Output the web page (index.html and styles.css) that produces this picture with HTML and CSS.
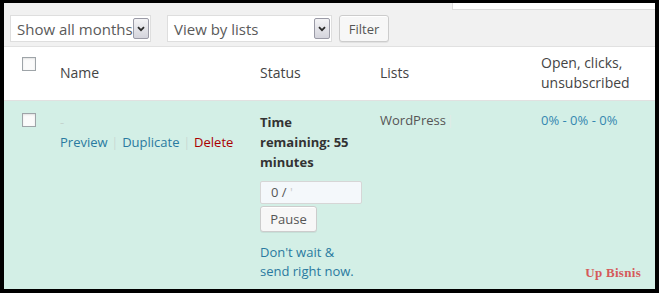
FILE: index.html
```html
<!DOCTYPE html>
<html lang="en">
<head>
    <meta charset="UTF-8">
    <meta name="viewport" content="width=device-width, initial-scale=1.0">
    <title>Newsletters</title>
    <link rel="stylesheet" href="styles.css">
</head>
<body>
    <div class="screen">
        <div class="toolbar">
            <div class="toolbar-strip"><div class="strip-box"></div></div>
            <div class="controls">
                <div class="fake-select months">
                    <span>Show all months</span>
                    <span class="select-arrow"><svg width="8" height="6" viewBox="0 0 8 6"><path d="M1 1.2 L4 4.2 L7 1.2" fill="none" stroke="#2b2b2b" stroke-width="1.8"/></svg></span>
                </div>
                <div class="fake-select lists">
                    <span>View by lists</span>
                    <span class="select-arrow"><svg width="8" height="6" viewBox="0 0 8 6"><path d="M1 1.2 L4 4.2 L7 1.2" fill="none" stroke="#2b2b2b" stroke-width="1.8"/></svg></span>
                </div>
                <button class="btn filter-btn">Filter</button>
            </div>
        </div>

        <table class="list-table">
            <colgroup>
                <col class="col-check">
                <col class="col-name">
                <col class="col-status">
                <col class="col-lists">
                <col class="col-stats">
            </colgroup>
            <thead>
                <tr>
                    <th class="check-col"><span class="checkbox"></span></th>
                    <th>Name</th>
                    <th>Status</th>
                    <th>Lists</th>
                    <th>Open, clicks, unsubscribed</th>
                </tr>
            </thead>
            <tbody>
                <tr class="active-row">
                    <td class="check-col"><span class="checkbox"></span></td>
                    <td>
                        <div class="empty-title">-</div>
                        <div class="row-actions">
                            <a href="#" class="link">Preview</a><span class="sep">|</span><a href="#" class="link">Duplicate</a><span class="sep">|</span><a href="#" class="delete">Delete</a>
                        </div>
                    </td>
                    <td>
                        <div class="time-left">Time remaining: 55 minutes</div>
                        <div class="progress-box">0 /<span class="faint"> '</span></div>
                        <button class="btn pause-btn">Pause</button>
                        <a href="#" class="link send-now">Don't wait &amp; send right now.</a>
                    </td>
                    <td class="list-name">WordPress<span class="sep">|</span></td>
                    <td class="stats-cell"><a href="#" class="link stats">0% - 0% - 0%</a></td>
                </tr>
            </tbody>
        </table>

        <div class="watermark">Up Bisnis</div>
    </div>
</body>
</html>
```

FILE: styles.css
```css
* {
    margin: 0;
    padding: 0;
    box-sizing: border-box;
}

body {
    font-family: "Open Sans", Arial, sans-serif;
    background: #000;
}

.screen {
    width: 659px;
    height: 293px;
    border: solid #000;
    border-width: 3px 4px 4px 4px;
    background: #f1f1f1;
    position: relative;
    overflow: hidden;
}

/* Верхняя панель с фильтрами */
.toolbar {
    height: 44px;
    background: #f1f1f1;
    border-bottom: 1px solid #e1e1e1;
}

.toolbar-strip {
    height: 6px;
    display: flex;
    justify-content: flex-end;
}

.strip-box {
    width: 203px;
    height: 7px;
    background: #fff;
    border-left: 1px solid #dcdcdc;
    border-bottom: 1px solid #dcdcdc;
}

.controls {
    display: flex;
    align-items: center;
    margin-top: 6px;
    padding-left: 6px;
}

.fake-select {
    height: 27px;
    display: flex;
    align-items: center;
    justify-content: space-between;
    background: #fff;
    border: 1px solid #dedede;
    padding: 0 1px 0 6px;
    font-size: 15px;
    color: #5a5a5a;
}

.months {
    width: 141px;
}

.lists {
    width: 165px;
    margin-left: 16px;
}

.select-arrow {
    width: 16px;
    height: 21px;
    border: 1px solid #9a9aa6;
    border-radius: 2px;
    background: linear-gradient(#f4f4f6, #d4d4dc);
    display: flex;
    align-items: center;
    justify-content: center;
}

.btn {
    font-family: "Open Sans", Arial, sans-serif;
    font-size: 13px;
    color: #555;
    background: #f7f7f7;
    border: 1px solid #cccccc;
    border-radius: 3px;
    box-shadow: inset 0 1px 0 #fff, 0 1px 0 rgba(0, 0, 0, 0.06);
}

.filter-btn {
    width: 50px;
    height: 27px;
    margin-left: 7px;
}

/* Таблица рассылок */
.list-table {
    width: 100%;
    border-collapse: collapse;
    table-layout: fixed;
}

.col-check { width: 46px; }
.col-name { width: 200px; }
.col-status { width: 120px; }
.col-lists { width: 161px; }
.col-stats { width: 124px; }

.list-table thead tr {
    background: #fff;
    border-bottom: 1px solid #e1e1e1;
}

.list-table th {
    text-align: left;
    font-weight: normal;
    font-size: 14px;
    line-height: 20px;
    color: #444;
    padding: 6px 10px 7px;
    vertical-align: middle;
}

.list-table th.check-col {
    vertical-align: top;
    padding: 10px 0 0 18px;
}

.checkbox {
    display: block;
    width: 14px;
    height: 14px;
    border: 1px solid #9ea4a8;
    background: #fbfbfb;
    box-shadow: inset 0 1px 2px rgba(0, 0, 0, 0.1);
}

.active-row {
    background: #d3efe6;
}

.active-row td {
    vertical-align: top;
    font-size: 13px;
    line-height: 20px;
    padding: 11px 10px 40px;
    color: #555;
}

.active-row td.check-col {
    padding: 12px 0 0 18px;
}

.active-row td.list-name,
.active-row td.stats-cell {
    padding-top: 9px;
}

.empty-title {
    color: #c4d4ce;
}

.link {
    color: #2a7aa0;
    text-decoration: none;
}

.delete {
    color: #a00;
    text-decoration: none;
}

.sep {
    color: #c9d8d3;
    margin: 0 4px;
    font-size: 12px;
}

.time-left {
    font-weight: bold;
    color: #333;
}

.progress-box {
    width: 102px;
    height: 23px;
    margin-top: 9px;
    padding-left: 10px;
    border: 1px solid #d6d6d6;
    border-radius: 2px;
    background: #f4f8fb;
    line-height: 21px;
    color: #555;
}

.faint {
    color: #ccc;
}

.pause-btn {
    display: block;
    width: 57px;
    height: 26px;
    margin-top: 2px;
}

.send-now {
    display: block;
    margin-top: 11px;
    line-height: 19px;
}

.list-name {
    color: #777;
}

.list-name .sep {
    margin-left: 1px;
    color: #e2ebe8;
}

.stats {
    font-size: 13px;
    color: #3587b0;
}

/* Водяной знак */
.watermark {
    position: absolute;
    right: 14px;
    bottom: 8px;
    font-family: "Liberation Serif", "Times New Roman", serif;
    font-weight: bold;
    font-size: 13px;
    color: #d55a5a;
    letter-spacing: 0.3px;
}
```
